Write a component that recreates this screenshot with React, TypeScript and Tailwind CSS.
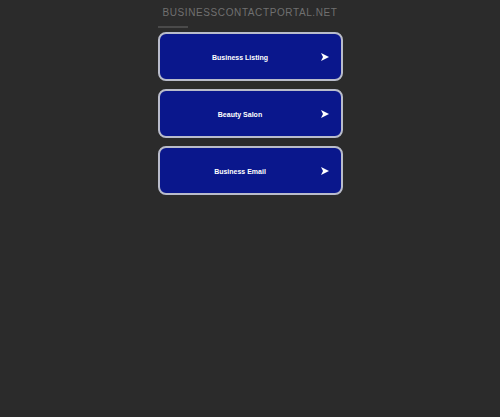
import React from "react";

const items = ["Business Listing", "Beauty Salon", "Business Email"];

function Arrow() {
  return (
    <svg width="8" height="8" viewBox="0 0 8 8" className="block shrink-0">
      <path d="M0 0 L8 4 L0 8 L2 4 Z" fill="#ffffff" />
    </svg>
  );
}

export default function App() {
  return (
    <div className="min-h-[417px] w-full bg-[#2b2b2b]" style={{ fontFamily: '"Liberation Sans", Arial, sans-serif' }}>
      <div className="mx-auto w-[185px] pt-[7px]">
        <div className="text-center text-[10px] leading-[11px] tracking-[0.6px] text-[#707070] uppercase whitespace-nowrap -mx-4">
          businesscontactportal.net
        </div>
        <div className="mt-[8px] h-[2px] w-[30px] bg-[#4a4a4a]" />
        <div className="mt-[4px] flex flex-col gap-[8px]">
          {items.map((t) => (
            <a
              key={t}
              href="#"
              className="flex h-[49px] items-center rounded-[8px] border-2 border-[#b9bccb] bg-[#0a178c] pr-[12px] text-white"
            >
              <span className="flex-1 text-center text-[7px] font-bold leading-none pt-[2px]">{t}</span>
              <Arrow />
            </a>
          ))}
        </div>
      </div>
    </div>
  );
}
